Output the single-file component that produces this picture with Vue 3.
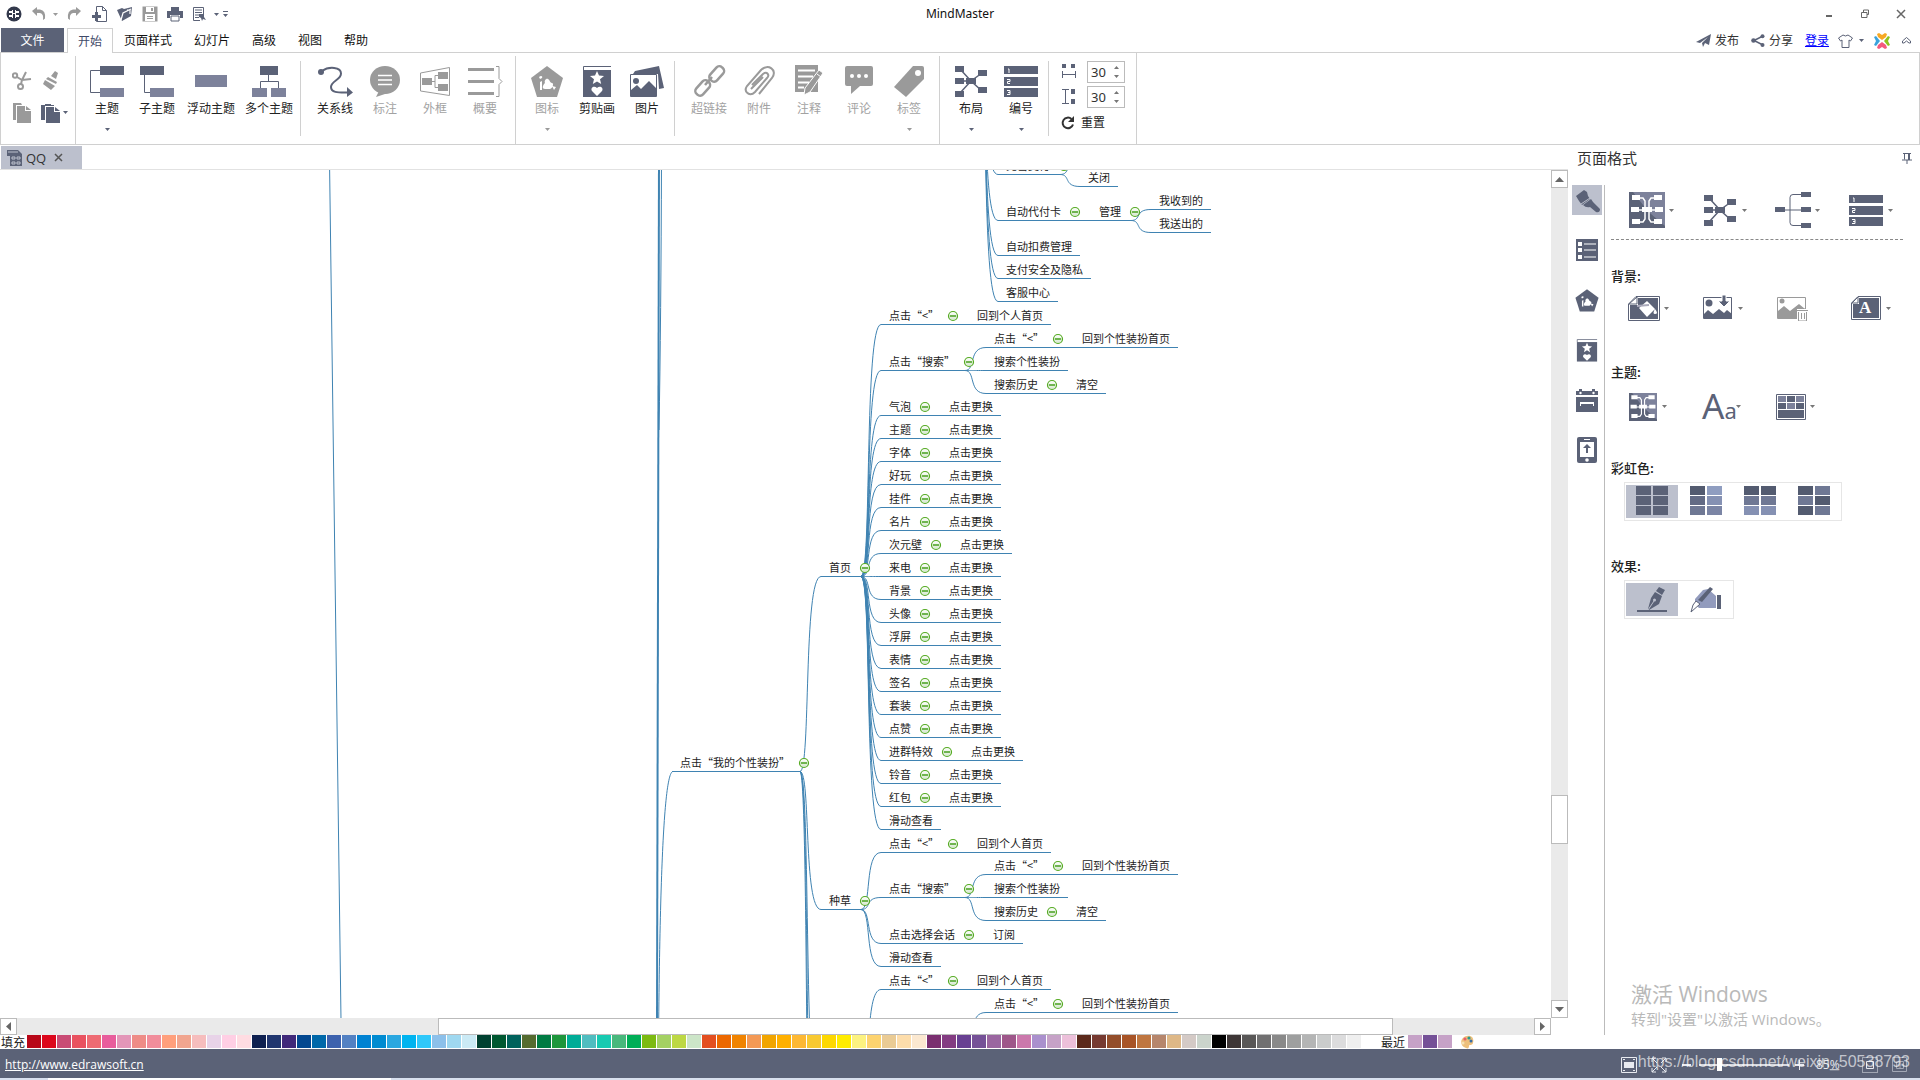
<script setup>
import { ref } from 'vue'

const tabs = ['页面样式', '幻灯片', '高级', '视图', '帮助']

const ribbon = [
  { items: [
    { label: '主题', icon: 'topic', caret: true },
    { label: '子主题', icon: 'subtopic' },
    { label: '浮动主题', icon: 'floating', wide: true },
    { label: '多个主题', icon: 'multiple', wide: true }
  ] },
  { end: true, items: [
    { label: '关系线', icon: 'relation' },
    { label: '标注', icon: 'callout', off: true },
    { label: '外框', icon: 'boundary', off: true },
    { label: '概要', icon: 'summary', off: true }
  ] },
  { items: [
    { label: '图标', icon: 'mark', off: true, caret: true },
    { label: '剪贴画', icon: 'clipart' },
    { label: '图片', icon: 'picture' }
  ] },
  { end: true, items: [
    { label: '超链接', icon: 'link', off: true },
    { label: '附件', icon: 'clip', off: true },
    { label: '注释', icon: 'note', off: true },
    { label: '评论', icon: 'comment', off: true },
    { label: '标签', icon: 'tag', off: true, caret: true }
  ] },
  { items: [
    { label: '布局', icon: 'layout', caret: true },
    { label: '编号', icon: 'number', caret: true }
  ] }
]

const hGap = ref(30)
const vGap = ref(30)
const zoom = ref(21)

const swatches = [
  '#b80718', '#dc071c', '#c94c75', '#e95260', '#ee6b73', '#e85d9c', '#e396b8', '#ee8c87', '#f18d9b', '#ff9f7c',
  '#f1a58f', '#f6bdbd', '#e8d3e8', '#ffcfe4', '#ffdce2', '#0e2050', '#21366f', '#40297a', '#034890', '#0068a9',
  '#3d62ae', '#5381c3', '#0082d2', '#008bd1', '#2aa7e0', '#00b4f0', '#2fc8fa', '#8cc0ea', '#9fd8f0', '#cbeaf5',
  '#004131', '#005831', '#00625c', '#556b2f', '#007b43', '#1e963c', '#00ac97', '#50bdc0', '#18cab1', '#48b87c',
  '#00ae57', '#7cba11', '#a4d163', '#bdd844', '#cce5c8', '#e34f20', '#ec6800', '#f08300', '#f39955', '#f1a500',
  '#ffb000', '#fdb833', '#f8c931', '#fdd800', '#ffec00', '#fcf280', '#fdd36f', '#eacb94', '#fdddab', '#fbe8d0',
  '#7a2f70', '#833c82', '#684092', '#755197', '#9a66a0', '#9e578a', '#cb78ac', '#aa90cd', '#c6a2c7', '#ecc0da',
  '#5b291b', '#763a31', '#934d2a', '#a85427', '#bf7640', '#b6866c', '#deb887', '#d4cac6', '#cbd4cc', '#000000',
  '#3e3636', '#595757', '#717071', '#898989', '#9e9f9f', '#b4b5b5', '#cacccc', '#dcdcdd', '#efefef'
]
const recent = ['#c6a2c7', '#755197', '#c6a2c7']

const sideTools = ['brush', 'list', 'mark', 'clipart', 'calendar', 'phone']
const layoutTools = ['theme', 'layout', 'tree', 'number']
const backTools = [
  { icon: 'fill', caret: true }, { icon: 'addpic', caret: true },
  { icon: 'delpic', off: true }, { icon: 'wordmark', caret: true }
]
const rainbow = [
  ['#5b6277', '#5b6277', '#5b6277', '#5b6277', '#5b6277', '#5b6277'],
  ['#535b70', '#8f9dc0', '#636b85', '#8591b3', '#6f7894', '#7b85a5'],
  ['#535b70', '#535b70', '#6f7894', '#6f7894', '#8591b3', '#8591b3'],
  ['#535b70', '#6f7894', '#6f7894', '#535b70', '#535b70', '#6f7894']
]

/* ---- mind map ---- */
const EM = 11
const widthOf = (s) => [...s].reduce((w, c) => w + (c === '<' ? 6 : EM), 0)

const labels = []
const toggles = []
const lines = []

const curve = (x1, y1, x2, y2) => {
  lines.push(`M${x1} ${y1}C${x1 + 11} ${y1} ${x1 + 3} ${y2} ${x2} ${y2}`)
}
const bar = (x1, x2, y) => lines.push(`M${x1} ${y}H${x2}`)

/* a chain of topics sharing one underline; returns the x of its right end */
function chain(x, y, texts, open = false) {
  let cx = x + 8
  texts.forEach((t, i) => {
    labels.push({ x: cx, y, t })
    const w = widthOf(t)
    const last = i === texts.length - 1
    if (!last || open) toggles.push({ x: cx + w + 14, y })
    cx += last ? w : w + 38
  })
  const end = cx + (open ? 10 : 8)
  bar(x, end, y)
  return end
}

function searchGroup(y) {
  const end = chain(881, y, ['点击“搜索”'], true)
  const kids = [['点击“<”', '回到个性装扮首页'], ['搜索个性装扮'], ['搜索历史', '清空']]
  kids.forEach((k, i) => {
    const ky = y + (i - 1) * 23
    curve(end, y, end + 21, ky)
    chain(end + 21, ky, k)
  })
}

/* wallet branch */
chain(998, 4, ['免密支付'], true)
curve(1060, 4, 1080, 16)
curve(1060, 4, 1080, -7)
chain(1080, 16, ['关闭'])
const cardEnd = chain(998, 50, ['自动代付卡', '管理'], true)
curve(cardEnd, 50, 1151, 39)
curve(cardEnd, 50, 1151, 62)
chain(1151, 39, ['我收到的'])
chain(1151, 62, ['我送出的'])
chain(998, 85, ['自动扣费管理'])
chain(998, 108, ['支付安全及隐私'])
chain(998, 131, ['客服中心'])
;[4, 50, 85, 108, 131].forEach((y) => curve(978, -130, 998, y))

/* home page branch */
const home = 406
chain(821, home, ['首页'], true)
const homeRows = ['气泡', '主题', '字体', '好玩', '挂件', '名片', '次元壁', '来电', '背景', '头像', '浮屏', '表情', '签名', '套装', '点赞', '进群特效', '铃音', '红包']
curve(861, home, 881, 154)
chain(881, 154, ['点击“<”', '回到个人首页'])
curve(861, home, 881, 200)
searchGroup(200)
homeRows.forEach((t, i) => {
  const y = 245 + i * 23
  curve(861, home, 881, y)
  chain(881, y, [t, '点击更换'])
})
curve(861, home, 881, 659)
chain(881, 659, ['滑动查看'])

/* wish list branch */
const wish = 739
chain(821, wish, ['种草'], true)
;[682, 727, 773, 796].forEach((y) => curve(861, wish, 881, y))
chain(881, 682, ['点击“<”', '回到个人首页'])
searchGroup(727)
chain(881, 773, ['点击选择会话', '订阅'])
chain(881, 796, ['滑动查看'])

/* next branch, continues below the viewport */
curve(861, 915, 881, 819)
chain(881, 819, ['点击“<”', '回到个人首页'])
curve(966, 865, 986, 842)
chain(986, 842, ['点击“<”', '回到个性装扮首页'])

/* parent topic */
chain(672, 601, ['点击“我的个性装扮”'], true)
curve(800, 601, 821, home)
;[wish, 960, 1140, 1400].forEach((y) => curve(800, 601, 821, y))
lines.push('M658 1010C658 760 662 601 673 601')
</script>

<template>
  <div class="app" lang="zh-CN">
    <svg class="defs" aria-hidden="true">
      <linearGradient id="knob" x1="0" y1="0" x2="0" y2="1"><stop offset="0" stop-color="#fff" /><stop offset="1" stop-color="#d3e6cb" /></linearGradient>
      <symbol id="topic" viewBox="0 0 36 32"><path d="M11 5.500H1.500V27.500H11" class="ln" /><path d="M11 1h24v9H11z" /><path d="M11 23h24v9H11z" fill="#7d829b" /></symbol>
      <symbol id="subtopic" viewBox="0 0 36 32"><path d="M5.500 10V27.500H11" class="ln" /><path d="M1 1h24v9H1z" /><path d="M11 23h24v9H11z" fill="#7d829b" /></symbol>
      <symbol id="floating" viewBox="0 0 36 32"><path d="M2 10h32v12H2z" fill="#7d829b" /></symbol>
      <symbol id="multiple" viewBox="0 0 36 32"><path d="M17.500 10v6M9.500 23v-6.500h18V23" class="ln" /><path d="M9 1h18v9H9z" /><path d="M1 23h15v9H1zM20 23h15v9H20z" fill="#7d829b" /></symbol>
      <symbol id="relation" viewBox="0 0 36 32"><path d="M5 6C12 1 24 2 24 8.500 24 15 14 16 14 22c0 6 8 5.500 16 5.500" class="ln" stroke-width="2" /><circle cx="4" cy="7" r="3" /><path d="M30 22l6 5.500-6 4.500z" /></symbol>
      <symbol id="callout" viewBox="0 0 36 32"><ellipse cx="18" cy="15" rx="15" ry="14" /><path d="M12 26l-3 6 12-4z" /><path d="M11 10.500h14M11 15h14M11 19.500h14" stroke="#fff" stroke-width="1.500" /></symbol>
      <symbol id="boundary" viewBox="0 0 36 32"><path d="M3.500 8L32.500 2.500v28L3.500 26zM15 16.500h3M22 10.500h-4v12h4" class="ln" /><path d="M5 13h10v7H5zM21 7h10v7H21zM21 19h10v7H21z" /></symbol>
      <symbol id="summary" viewBox="0 0 36 32"><path d="M1 3h26v3H1zM1 15h26v3H1zM1 27h26v3H1z" /><path d="M29 1.500h3v12l3 3-3 3V31.500h-3" class="ln" /></symbol>
      <symbol id="mark" viewBox="0 0 36 32"><path d="M18 1l16 12-6 19H8L2 13z" stroke-linejoin="round" /><path d="M16 18c-1-2 1-5 3-4s2 4 4 4 1 5-2 6h-5c-3 0-3-3 0-6zM11 17l2-1v9h-2zM10 12c2-2 4-1 3 1l-2 1zM23 21l4 1-2 3z" fill="#fff" /></symbol>
      <symbol id="clipart" viewBox="0 0 36 32"><path d="M4.500 5V1.500H32" class="ln" /><path d="M4 5h28v27H4z" /><path d="M18 6l2 4.500 5 .5-4 3.300 1.200 4.700L18 16.500 13.800 19l1.200-4.700L11 11l5-.5zM18 31l-5-5c-2-3 2-6 5-3 3-3 7 0 5 3z" fill="#fff" /></symbol>
      <symbol id="picture" viewBox="0 0 36 32"><path d="M6 6L30 1l5 22-5 1-1-15H4z" /><path d="M1.500 9.500h26v22h-26z" class="ln" /><circle cx="7" cy="16" r="3" /><path d="M2 31V25l6-5 4 4 8-8 7 7v8z" /></symbol>
      <symbol id="link" viewBox="0 0 36 32"><g class="ln" stroke-width="2.500"><rect x="17" y="5" width="17" height="9" rx="4" transform="rotate(-48 25 9)" /><rect x="3" y="19" width="17" height="9" rx="4" transform="rotate(-48 11 23)" /><path d="M14 20l7-8" /></g></symbol>
      <symbol id="clip" viewBox="0 0 36 32"><path d="M11 20L22 9c4-3 7 1 4 4L14 27c-5 5-12 0-8-6L20 5c7-7 17 0 11 8L18 29M10 24l12-12" class="ln" stroke-width="2" /></symbol>
      <symbol id="note" viewBox="0 0 36 32"><path d="M4 0h23v27H4z" /><path d="M7 5.500h17M7 11.500h15M7 17.500h11M7 22.500h6" stroke="#fff" stroke-width="2" /><path d="M28 5l4 3-13 19-6 3 1-7z" stroke="#fff" /><path d="M26 9l4 3" stroke="#fff" /></symbol>
      <symbol id="comment" viewBox="0 0 36 32"><path d="M6 1h24q2 0 2 2v16q0 2-2 2H19l-9 8v-8H6q-2 0-2-2V3q0-2 2-2z" /><g fill="#fff"><circle cx="11" cy="11" r="2" /><circle cx="18" cy="11" r="2" /><circle cx="25" cy="11" r="2" /></g></symbol>
      <symbol id="tag" viewBox="0 0 36 32"><path d="M22 1h9q2 0 2 2v11L15 32 3 22z" /><circle cx="27" cy="8" r="3" fill="#fff" /></symbol>
      <symbol id="layout" viewBox="0 0 36 32"><path d="M7 4l11 12M7 16h11M7 28l11-12M29 8L18 16l11 10" class="ln" stroke-width="1.500" /><path d="M2 1h9v6H2zM2 13h9v6H2zM2 26h9v6H2zM13 13h10v6H13zM25 5h9v6h-9zM25 22h9v6h-9z" /></symbol>
      <symbol id="number" viewBox="0 0 36 32"><path d="M1 1h34v8H1zM1 12h34v9H1zM1 23h34v9H1z" /><path d="M5 4h1v4M4 14.500h3v2H4.500v2H7M4 25.500h3v4H4M5 27.500h2" fill="none" stroke="#fff" /></symbol>
      <symbol id="theme" viewBox="0 0 36 36"><path d="M0 0h36v36H0z" /><path d="M4 0h32v34L22 22 18 18z" fill="#7d829b" /><path d="M10 6h4l2 3v18l-2 3h-4M26 6h-4l-2 3v18l2 3h4M8 18h20" fill="none" stroke="#fff" stroke-width="1.500" /><path d="M3 3h8v5H3zM25 3h8v5h-8zM2 15h8v5H2zM26 15h8v5h-8zM3 27h8v5H3zM25 27h8v5h-8zM13 15h10v5H13z" fill="#fff" /></symbol>
      <symbol id="tree" viewBox="0 0 36 36"><path d="M10 18h16M26 2.500h-8q-3 0-3 3v25q0 3 3 3h8" class="ln" /><path d="M0 15h10v5H0zM26 0h10v5H26zM26 15h10v5H26zM26 31h10v5H26z" /></symbol>
      <symbol id="brush" viewBox="0 0 30 30"><path d="M4 11l8-6 3 2 1 4 2 3-8 6-3-4z" /><path d="M11 20l8-6 2 3 7 7q0 4-4 3l-6-5q-4 1-7-2z" /><path d="M9 19l9-6" stroke="#bcc0cd" /></symbol>
      <symbol id="list" viewBox="0 0 30 30"><path d="M4 4h22v22H4z" /><path d="M6 7h4v4H6zM6 13h4v4H6zM6 20h4v4H6zM12 8.500h12v1H12zM12 14.500h12v1H12zM12 21.500h12v1H12z" fill="#fff" /></symbol>
      <symbol id="calendar" viewBox="0 0 30 30"><path d="M4 6h3V4h3v2h10V4h3v2h3v4H4zM4 12h22v15H4z" /><path d="M8 17h14v4h-1v-2H9v2H8z" fill="#fff" /><circle cx="8.500" cy="8" r="1.200" fill="#fff" /><circle cx="21.500" cy="8" r="1.200" fill="#fff" /></symbol>
      <symbol id="phone" viewBox="0 0 30 30"><rect x="5" y="2" width="20" height="26" rx="2" /><path d="M8 7h14v15H8zM12 4h6v1h-6z" fill="#fff" /><circle cx="15" cy="25" r="1.800" fill="#fff" /><path d="M15 9l4 4h-3v5h-2v-5h-3z" /></symbol>
      <symbol id="fill" viewBox="0 0 32 26"><path d="M.5 25.500V9L8 1.500h23.500v24z" class="ln" /><path d="M2 23V10h8V3h20v21H2z" /><path d="M1 9h8V2z" fill="#fff" stroke="#5b6277" /><path d="M11 13l8-7 8 8-8 8zM27 14q4 5 0 5-3 0 0-5z" fill="#fff" /><path d="M9 11l12-1" stroke="#aab" stroke-width="2" /></symbol>
      <symbol id="addpic" viewBox="0 0 32 26"><path d="M1.500 2.500h28v21h-28z" class="ln" /><circle cx="7" cy="8" r="3.500" /><path d="M2 23v-4l4-4 5 4 6-5 5 4 3-3 5 4v5z" /><path d="M20 0h4v6h4l-6 6-6-6h4z" stroke="#fff" /></symbol>
      <symbol id="delpic" viewBox="0 0 32 26"><path d="M1.500 2.500h28v21h-28z" class="ln" /><circle cx="6" cy="6" r="2.500" /><path d="M2 23v-7l6-5 6 5 9-7 6 5v9z" /><path d="M21 14h12v12H21z" fill="#fff" /><path d="M21 15.500h11M24.500 13.500h4M22.500 17v9h8v-9M25.500 18v6M28.500 18v6" class="ln" /></symbol>
      <symbol id="wordmark" viewBox="0 0 32 26"><path d="M1.500 24.500V8L8 1.500h22.500v23z" class="ln" /><path d="M3 22.500V9h6V3h20v20H3z" /><path d="M2 8h6V2z" fill="#fff" stroke="#5b6277" /></symbol>
      <symbol id="palette-grid" viewBox="0 0 30 26"><path d="M.5 .5h29v25H.5z" class="ln" /><path d="M2 2h8v6H2zM20 2h8v6h-8zM11 9h8v6h-8z" fill="#7d829b" /><path d="M11 2h8v6h-8zM2 9h8v6H2zM20 9h8v6h-8zM2 16h26v8H2z" /></symbol>
      <symbol id="caret" viewBox="0 0 5 3"><path d="M0 0h5L2.500 3z" /></symbol>
    </svg>

    <header class="titlebar">
      <div class="quick">
        <svg width="16" height="16" viewBox="0 0 16 16"><circle cx="8" cy="8" r="7.500" fill="#33394c" /><path d="M3 5h3v2H3zM3 9h3v2H3zM10 5h3v2h-3zM10 9h3v2h-3zM6 4h1v8H6zM9 4h1v8H9zM6 7h4v1H6z" fill="#fff" /></svg>
        <button class="tb undo off" aria-label="undo"><svg width="15" height="14" viewBox="0 0 15 14"><path d="M0 4l5-4v2.500h3q6 1 5 9l-2 1.500q1-6-3-7H5v3z" /></svg></button>
        <button class="tb small off" aria-label="undo list"><svg width="5" height="3"><use href="#caret" /></svg></button>
        <button class="tb redo off" aria-label="redo"><svg width="15" height="14" viewBox="0 0 15 14"><path d="M15 4l-5-4v2.500H7q-6 1-5 9L4 13Q3 7 7 6h3v3z" /></svg></button>
        <button class="tb" aria-label="new"><svg width="16" height="16" viewBox="0 0 16 16"><path d="M4.500 6V.5h6l4 4v11h-10V13M10.500 .5v4h4" class="ln" /><path d="M3 6h3v3h3v3H6v3H3v-3H0V9h3z" /></svg></button>
        <button class="tb" aria-label="open"><svg width="16" height="16" viewBox="0 0 16 16"><path d="M0 4l5-2 2 1 8-2-1 9-9 5z" /><path d="M4 14L6 7l8-4M10 4l3 0 0 4" stroke="#fff" fill="none" stroke-width="1.200" /></svg></button>
        <button class="tb off" aria-label="save"><svg width="16" height="16" viewBox="0 0 16 16"><path d="M.5 .5h15v15H.5z" /><path d="M4 1h8v5H4zM3 8h10v7H3z" fill="#fff" /><path d="M5 10h6v1H5zM5 12h6v1H5zM9 2h2v3H9z" /></svg></button>
        <button class="tb" aria-label="print"><svg width="16" height="16" viewBox="0 0 16 16"><path d="M4 1h8v4H4zM0 5h16v7h-3V9H3v3H0z" /><path d="M4 10h8v5H4z" class="ln" /></svg></button>
        <button class="tb" aria-label="export"><svg width="16" height="16" viewBox="0 0 16 16"><path d="M11.500 9V1.500h-10v13H8M3 4h7M3 6.500h7M3 9h5M3 11.500h4" class="ln" /><path d="M7 8h5v3l2 3-3-1-1 2-1-3-2-1z" /></svg></button>
        <button class="tb small" aria-label="export list"><svg width="5" height="3"><use href="#caret" /></svg></button>
        <button class="tb small" aria-label="customize"><svg width="5" height="6" viewBox="0 0 5 6"><path d="M0 0h5v1H0zM0 3h5L2.500 6z" /></svg></button>
      </div>
      <h1>MindMaster</h1>
      <div class="win">
        <button aria-label="minimize"><svg width="10" height="10" viewBox="0 0 10 10"><path d="M2 6h6v2H2z" /></svg></button>
        <button aria-label="restore"><svg width="10" height="10" viewBox="0 0 10 10"><path d="M3.500 3V1h5v4.500H7M1.500 3.500H7V8.500H1.500z" fill="none" stroke="currentColor" /></svg></button>
        <button aria-label="close"><svg width="10" height="10" viewBox="0 0 10 10"><path d="M1 1l8 8M9 1L1 9" fill="none" stroke="currentColor" stroke-width="1.500" /></svg></button>
      </div>
    </header>

    <nav class="menu">
      <button class="file">文件</button>
      <button class="current">开始</button>
      <button v-for="t in tabs" :key="t">{{ t }}</button>
      <div class="account">
        <button><svg width="15" height="14" viewBox="0 0 15 14"><path d="M0 8L15 0l-2 11-4-2-2 4-1-4 6-6-8 6z" /></svg>发布</button>
        <button><svg width="14" height="13" viewBox="0 0 14 13"><path d="M12 2L3 6.500 12 11" fill="none" stroke="currentColor" stroke-width="1.500" /><circle cx="11.500" cy="2.200" r="2" /><circle cx="2.500" cy="6.500" r="2.300" /><circle cx="11.500" cy="11" r="2" /></svg>分享</button>
        <a href="#login">登录</a>
        <button class="shirt" aria-label="skin"><svg width="15" height="14" viewBox="0 0 15 14"><path d="M5 1q2.500 2 5 0l4.500 3-2 3L11 6v7.500H4V6L2.500 7l-2-3z" class="ln" /></svg><svg width="5" height="3"><use href="#caret" /></svg></button>
        <svg class="logo" width="16" height="16" viewBox="0 0 16 16"><path d="M3 1l2-1 3 2 3-2 2 1-1 3-4 3-4-3z" fill="#f7a823" /><path d="M3 15l2 1 3-2 3 2 2-1-1-3-4-3-4 3z" fill="#f4587c" /><path d="M0 4l2-1 4 5-4 5-2-1 2-4z" fill="#3aa3dc" /><path d="M16 4l-2-1-4 5 4 5 2-1-2-4z" fill="#8fc31f" /></svg>
        <button aria-label="collapse"><svg width="9" height="8" viewBox="0 0 9 8"><path d="M.5 4l4-3.500 4 3.500v2H7L4.500 4 2 6H.5z" class="ln" /></svg></button>
      </div>
    </nav>

    <section class="ribbon">
      <div class="clipboard">
        <button class="off" aria-label="cut"><svg width="20" height="20" viewBox="0 0 20 20"><g fill="none" stroke="currentColor" stroke-width="2"><circle cx="3" cy="5.500" r="2.200" /><circle cx="8.500" cy="16.500" r="2.500" /><path d="M5 7l5 3 9-1M9 14l1-4 4-8" /></g></svg></button>
        <button class="off" aria-label="format painter"><svg width="20" height="20" viewBox="0 0 20 20"><path d="M14 1l3 2-2 6-5-3zM7 7l9 5-1 2-10-5zM4 10l10 6-4 4-8-6z" /></svg></button>
        <button class="off" aria-label="copy"><svg width="20" height="20" viewBox="0 0 20 20"><path d="M1 0h8l1 2H4v15H1z" /><path d="M5 3h8v5h6v12H5z" /><path d="M14 3l5 4h-5z" /></svg></button>
        <button class="paste" aria-label="paste"><svg width="20" height="20" viewBox="0 0 20 20"><path d="M0 2h4V1h6v1h3v1H4v14H0z" /><path d="M5 4h8v5h6v11H5z" /><path d="M14 4l5 4h-5z" /></svg><svg width="5" height="3"><use href="#caret" /></svg></button>
      </div>
      <div v-for="(g, i) in ribbon" :key="i" class="group" :class="{ end: g.end }">
        <button v-for="b in g.items" :key="b.label" class="big" :class="{ off: b.off, wide: b.wide }">
          <svg width="36" height="32"><use :href="'#' + b.icon" /></svg>
          <span>{{ b.label }}</span>
          <svg v-if="b.caret" width="5" height="3"><use href="#caret" /></svg>
        </button>
      </div>
      <div class="spacing">
        <label>
          <svg width="16" height="16" viewBox="0 0 16 16"><path d="M1 0h4v4H1zM10 0h4v4h-4z" /><path d="M1.500 7v7M14.500 7v7M1 10.500h13" class="ln" /></svg>
          <input v-model="hGap" type="text" aria-label="水平间距" />
          <svg class="spin" width="5" height="14" viewBox="0 0 5 14"><path d="M0 4h5L2.500 1zM0 10h5l-2.500 3z" /></svg>
        </label>
        <label>
          <svg width="16" height="16" viewBox="0 0 16 16"><path d="M1 .5h7M1 14.500h7M4.500 1v13" class="ln" /><path d="M10 0h4v5h-4zM10 10h4v5h-4z" /></svg>
          <input v-model="vGap" type="text" aria-label="垂直间距" />
          <svg class="spin" width="5" height="14" viewBox="0 0 5 14"><path d="M0 4h5L2.500 1zM0 10h5l-2.500 3z" /></svg>
        </label>
        <button><svg width="14" height="14" viewBox="0 0 14 14"><path d="M12 8.500A5.300 5.300 0 1 1 10.500 3" fill="none" stroke="#333" stroke-width="2" /><path d="M13 0v6H7z" fill="#333" /></svg>重置</button>
      </div>
    </section>

    <main>
      <div class="work">
        <div class="docs">
          <button class="doc">
            <svg width="16" height="16" viewBox="0 0 16 16"><path d="M0 0h11l4 4v12H3V6H0z" /><path d="M1 2h10M5 7h3v2H5zM10 7h3v2h-3zM5 12h3v2H5zM10 12h3v2h-3z" stroke="#bcc0cd" fill="none" /></svg>
            <span>QQ</span>
            <svg width="9" height="9" viewBox="0 0 9 9"><path d="M1 1l7 7M8 1L1 8" stroke="#555" stroke-width="1.500" /></svg>
          </button>
        </div>
        <div class="view">
          <div class="canvas">
            <svg class="map">
              <g class="wires">
                <path d="M329.500 -10L341 850" />
                <path d="M659 -10Q659 500 657 850" stroke-width="2" />
                <path d="M661.500 -10Q661 150 659 260" />
                <path v-for="(d, i) in lines" :key="i" :d="d" transform="translate(0 .5)" />
              </g>
              <g v-for="(t, i) in toggles" :key="'t' + i" class="toggle">
                <circle :cx="t.x" :cy="t.y - 8" r="4.500" />
                <path :d="`M${t.x - 3} ${t.y - 8}h6`" />
              </g>
              <text v-for="(l, i) in labels" :key="'l' + i" :x="l.x" :y="l.y - 4">{{ l.t }}</text>
            </svg>
          </div>
          <div class="bar vbar">
            <button aria-label="up"><svg width="9" height="5" viewBox="0 0 9 5"><path d="M4.500 0L9 5H0z" /></svg></button>
            <i class="v1"></i><i class="thumb v2"></i><i class="v3"></i>
            <button aria-label="down"><svg width="9" height="5" viewBox="0 0 9 5"><path d="M0 0h9L4.500 5z" /></svg></button>
          </div>
        </div>
        <div class="bar hbar">
          <button aria-label="left"><svg width="5" height="9" viewBox="0 0 5 9"><path d="M5 0v9L0 4.500z" /></svg></button>
          <i class="h1"></i><i class="thumb h2"></i><i class="h3"></i>
          <button aria-label="right"><svg width="5" height="9" viewBox="0 0 5 9"><path d="M0 0v9l5-4.500z" /></svg></button>
        </div>
      </div>

      <aside>
        <div class="paneltitle">
          <h2>页面格式</h2>
          <button aria-label="pin"><svg width="10" height="12" viewBox="0 0 10 12"><path d="M1 1.500h8M2.500 1.500v6M0 8h10M5 8v4" class="ln" /><path d="M6 1h2v7H6z" /></svg></button>
        </div>
        <div class="panel">
          <div class="rail">
            <button v-for="(s, i) in sideTools" :key="s" :class="{ on: i === 0, mini: s === 'mark' || s === 'clipart' }" :aria-label="s"><svg><use :href="'#' + s" /></svg></button>
          </div>
          <div class="props">
            <div class="tools top">
              <button v-for="t in layoutTools" :key="t" :aria-label="t"><svg width="36" height="36"><use :href="'#' + t" /></svg><svg width="5" height="3"><use href="#caret" /></svg></button>
            </div>
            <h3>背景:</h3>
            <div class="tools">
              <button v-for="t in backTools" :key="t.icon" :class="{ off: t.off }" :aria-label="t.icon">
                <svg width="32" height="26"><use :href="'#' + t.icon" /></svg><b v-if="t.icon === 'wordmark'">A</b><svg v-if="t.caret" width="5" height="3"><use href="#caret" /></svg>
              </button>
            </div>
            <h3>主题:</h3>
            <div class="tools">
              <button aria-label="theme"><svg width="30" height="28"><use href="#theme" /></svg><svg width="5" height="3"><use href="#caret" /></svg></button>
              <button class="font" aria-label="font"><span class="aa">A<small>a</small></span><svg width="5" height="3"><use href="#caret" /></svg></button>
              <button aria-label="colors"><svg width="30" height="26"><use href="#palette-grid" /></svg><svg width="5" height="3"><use href="#caret" /></svg></button>
            </div>
            <h3>彩虹色:</h3>
            <div class="choices">
              <button v-for="(r, i) in rainbow" :key="i" :class="{ on: i === 0 }" aria-label="rainbow">
                <span class="cells"><i v-for="(c, j) in r" :key="j" :style="{ background: c }"></i></span>
              </button>
            </div>
            <h3 class="fx">效果:</h3>
            <div class="choices">
              <button class="on" aria-label="pen"><svg width="30" height="26" viewBox="0 0 30 26"><path d="M0 23h30v2H0z" /><path d="M22 0l6 3-3 5-6-4z" /><path d="M18 5l7 4-3 8-10 6-1-1 3-11z" /><path d="M11 23l6-9" stroke="#bcc0cd" fill="none" /><circle cx="17.500" cy="13" r="1.500" fill="#bcc0cd" /></svg></button>
              <button aria-label="hand drawn"><svg width="32" height="26" viewBox="0 0 32 26"><path d="M5 12l8-9 5-1 8 7v12H9l-4-4z" fill="#929bbd" /><path d="M27 8h4v14h-4z" /><path d="M20 0l3 2L12 15l-4-2z" /><path d="M6 14l4 3-9 8 2-7z" fill="#fff" stroke="#5b6277" /></svg></button>
            </div>
            <div class="activate"><p>激活 Windows</p><p>转到"设置"以激活 Windows。</p></div>
          </div>
        </div>
      </aside>
    </main>

    <div class="colors">
      <span class="lab">填充</span>
      <button v-for="(c, i) in swatches" :key="i" :style="{ background: c }" :aria-label="c"></button>
      <span class="lab recent">最近</span>
      <button v-for="(c, i) in recent" :key="'r' + i" :style="{ background: c }" :aria-label="c"></button>
      <svg class="pal" width="14" height="14" viewBox="0 0 14 14"><path d="M7 1c6-1 7 4 6 7s-4 1-4 3-1 3-3 2C-1 11 0 2 7 1z" fill="#eec07c" /><circle cx="5" cy="4" r="1.600" fill="#e8606a" /><circle cx="9" cy="3" r="1.600" fill="#2a9a8c" /><circle cx="11" cy="6" r="1.500" fill="#3a6ea5" /><circle cx="3" cy="8" r="1.500" fill="#f7e2b5" /></svg>
    </div>

    <footer>
      <a href="http://www.edrawsoft.cn">http://www.edrawsoft.cn</a>
      <div class="status">
        <button aria-label="fit"><svg width="16" height="16" viewBox="0 0 16 16"><path d="M.5 .5h15v15H.5z" class="ln" /><path d="M3 5h10v6H3z" /><path d="M2 2h2v1H2zM12 2h2v1h-2zM2 13h2v1H2zM12 13h2v1h-2z" /></svg></button>
        <button class="full" aria-label="full screen"><svg width="16" height="16" viewBox="0 0 16 16"><path d="M1 5V1h4M11 1h4v4M15 11v4h-4M5 15H1v-4M1 1l5 5M15 1l-5 5M15 15l-5-5M1 15l5-5" class="ln" /></svg></button>
        <button aria-label="zoom out"><svg width="9" height="10" viewBox="0 0 9 10"><path d="M0 4h9v2H0z" /></svg></button>
        <input v-model="zoom" type="range" min="0" max="100" aria-label="zoom" />
        <button aria-label="zoom in"><svg width="9" height="10" viewBox="0 0 9 10"><path d="M0 4h9v2H0zM4 0h1v10H4z" /></svg></button>
        <span class="pct">85%</span>
        <button aria-label="page"><svg width="16" height="16" viewBox="0 0 16 16"><path d="M.5 .5h15v15H.5z" class="ln" stroke-dasharray="1 1" /><path d="M4.500 4.500h7v7h-7z" class="ln" /></svg></button>
        <button class="dim" aria-label="window"><svg width="16" height="16" viewBox="0 0 16 16"><path d="M.5 .5h14v14H.5zM4.500 4.500h7v7h-7zM8 5v6M5 8h6" class="ln" /></svg></button>
      </div>
      <span class="blog">https://blog.csdn.net/weixin_50538793</span>
    </footer>
    <div class="strip"><i></i></div>
  </div>
</template>

<style>
body { background: #fff; }
</style>

<style scoped>
.app {
  display: flex; flex-direction: column; height: 100vh; overflow: hidden; position: relative;
  font: 12px/18px "Open Sans", "Noto Sans CJK SC", sans-serif; color: #222; background: #fff;
}
.defs { position: absolute; width: 0; height: 0; }
button { border: 0; background: none; padding: 0; margin: 0; font: inherit; color: inherit; display: flex; align-items: center; }
svg { fill: currentColor; flex: none; display: block; }
.ln { fill: none; stroke: currentColor; }
h1, h2, h3, p { margin: 0; font-weight: 400; }
.off { color: #9a9a9a; }

.titlebar { display: grid; grid-template-columns: 1fr auto 1fr; height: 28px; align-items: center; }
.titlebar h1 { font: 12px/18px "Noto Sans", sans-serif; color: #111; }
.quick { display: flex; align-items: center; padding-left: 6px; gap: 9px; height: 24px; color: #5b6277; }
.quick .off { color: #9a9a9a; }
.quick .undo { margin-left: 1px; }
.quick .small { margin: 0 -2px 0 -3px; }
.quick .redo { margin-left: 1px; margin-right: 2px; }
.win { display: flex; justify-content: flex-end; gap: 26px; padding-right: 14px; height: 24px; color: #666; }

.menu { display: flex; height: 24px; color: #111; position: relative; margin-bottom: -1px; }
.menu > button { padding: 2px 11px 0; height: 24px; }
.menu .file { width: 63px; justify-content: center; margin: 0 3px 0 1px; background: #5b6277; color: #fff; padding: 2px 0 0; }
.menu .current { border: 1px solid #d0d0d0; border-bottom: 0; height: 25px; padding: 1px 10px 0; background: #fff; color: #3f4a68; position: relative; z-index: 1; }
.account { margin-left: auto; display: flex; align-items: center; padding: 1px 9px 0 0; gap: 12px; color: #222; }
.account button { gap: 4px; color: #333; }
.account button svg { color: #5b6277; }
.account a { color: #00f; }
.account .shirt { gap: 6px; margin-left: -3px; margin-right: -2px; }

.ribbon { display: flex; height: 91px; border: 1px solid #d0d0d0; margin-top: 1px; }
.clipboard { display: grid; grid-template-columns: 29px 34px; grid-template-rows: 33px 33px; align-content: start; padding: 7px 0 0 11px; margin: 3px 0 0; border-right: 1px solid #d0d0d0; color: #5b6277; }
.clipboard .off { color: #9a9a9a; }
.clipboard .paste { gap: 2px; }
.group { display: flex; padding: 0 2px 0 6px; border-right: 1px solid #d0d0d0; margin: 8px 0; }
.group.end { padding: 5px 5px 0 9px; margin: 3px 0 0; }
.big { width: 50px; flex-direction: column; padding-top: 4px; color: #5b6277; }
.big.wide { width: 58px; }
.big.off { color: #9a9a9a; }
.big span { color: #222; line-height: 18px; margin: 3px 0 10px; white-space: nowrap; }
.big.off span { color: #a2a2a2; }
.spacing { width: 88px; padding: 8px 0 0 12px; border-right: 1px solid #d0d0d0; color: #5b6277; display: flex; flex-direction: column; gap: 3px; box-sizing: border-box; }
.spacing label { display: flex; align-items: center; position: relative; height: 22px; }
.spacing input { width: 38px; height: 22px; box-sizing: border-box; border: 1px solid #bbb; padding: 0 0 0 3px; margin-left: 10px; font: 13px/18px "Noto Sans", sans-serif; color: #333; }
.spacing .spin { position: absolute; left: 53px; top: 4px; color: #777; }
.spacing button { gap: 6px; color: #222; height: 24px; }

main { flex: 1; min-height: 0; display: flex; }
.work { flex: 1; min-width: 0; display: flex; flex-direction: column; }
.docs { height: 24px; border-bottom: 1px solid #e2e2e2; display: flex; align-items: flex-end; }
.doc { background: #bcc0cd; height: 23px; width: 81px; margin-left: 1px; padding-left: 6px; gap: 3px; font-size: 13px; color: #333; box-sizing: border-box; }
.doc svg { color: #5b6277; }
.doc span { margin-right: 5px; }
.view { flex: 1; min-height: 0; display: flex; }
.canvas { flex: 1; min-width: 0; overflow: hidden; position: relative; }
.map { position: absolute; inset: 0; width: 100%; height: 100%; font: 11px "Noto Sans CJK SC", sans-serif; font-kerning: none; fill: #1c1c1c; }
.wires { fill: none; stroke: #3f83b2; stroke-width: 1; }
.toggle circle { fill: url(#knob); stroke: #55ab22; stroke-width: 1.2; }
.toggle path { stroke: #3c9a10; stroke-width: 1.4; }
.bar { display: flex; background: #eaeaea; color: #666; }
.bar button { flex: none; background: #fff; border: 1px solid #bbb; box-sizing: border-box; justify-content: center; }
.vbar { flex-direction: column; width: 17px; }
.vbar button { height: 18px; }
.thumb { background: #fff; border: 1px solid #bbb; box-sizing: border-box; }
.v1 { flex: 609 0 0; }
.v2 { flex: 47 0 0; }
.v3 { flex: 157 0 0; }
.hbar { height: 17px; margin-right: 17px; }
.hbar button { width: 17px; }
.h1 { flex: 422 0 0; }
.h2 { flex: 954 0 0; }
.h3 { flex: 141 0 0; }

aside { width: 352px; display: flex; flex-direction: column; color: #5b6277; }
.paneltitle { height: 40px; box-sizing: border-box; padding: 3px 8px 17px 9px; display: flex; align-items: center; justify-content: space-between; }
.paneltitle h2 { font-size: 15px; line-height: 20px; color: #333; }
.panel { flex: 1; display: flex; }
.rail { flex: none; width: 37px; box-sizing: border-box; border-right: 1px solid #bbb; display: flex; flex-direction: column; gap: 20px; padding-left: 4px; }
.rail button { width: 30px; height: 30px; justify-content: center; }
.rail button svg { width: 30px; height: 30px; }
.rail button.mini svg { width: 26px; height: 24px; }
.on { background: #bcc0cd; }
.props { flex: 1; min-width: 0; padding-left: 6px; display: flex; flex-direction: column; }
.tools { display: grid; grid-template-columns: 74px 74px 74px auto; height: 32px; padding-left: 17px; margin-bottom: 38px; }
.tools button { gap: 4px; position: relative; color: #5b6277; }
.tools button.off { color: #9a9a9a; }
.tools button svg + svg, .aa + svg, b + svg { color: #777; }
.tools.top { grid-template-columns: 73px 73px 73px auto; height: 36px; padding: 7px 0 11px 18px; border-bottom: 1px dashed #888; margin: 0 17px 26px 0; }
.tools b { position: absolute; left: 9px; font: bold 17px/20px "Liberation Serif", serif; color: #fff; }
.aa { font: 35px/30px "Noto Sans", sans-serif; color: #5b6277; width: 32px; display: flex; align-items: baseline; padding-top: 3px; }
.aa small { font-size: 22px; }
.tools .font { gap: 2px; }
h3 { font-size: 13px; line-height: 20px; margin-bottom: 6px; font-weight: 500; color: #222; font-family: "Noto Sans CJK SC", sans-serif; }
.choices { align-self: flex-start; margin-left: 13px; display: flex; gap: 2px; border: 1px solid #e6e6e6; height: 35px; padding: 1px; margin-top: -2px; }
.choices button { width: 52px; height: 33px; margin-top: 1px; justify-content: center; }
.cells { display: grid; grid-template-columns: 15px 15px; grid-auto-rows: 9px; gap: 1px 2px; margin-top: -3px; }
h3.fx { margin-top: 35px; }
.activate { margin-top: auto; padding: 0 0 5px 20px; color: #b9b9b9; }
.activate p { font-size: 21px; line-height: 28px; }
.activate p + p { font-size: 15px; line-height: 22px; }

.colors { height: 14px; display: flex; gap: 1px; align-items: flex-start; background: #fff; }
.colors button { width: 14px; height: 13px; }
.lab { width: 25px; padding-left: 1px; line-height: 15px; color: #222; }
.recent { margin-left: 18px; width: 26px; }
.pal { margin-left: 7px; }
footer { height: 29px; background: #5b6277; color: #fff; display: flex; align-items: center; justify-content: space-between; padding: 0 12px 0 5px; position: relative; }
footer a { color: #fff; line-height: 18px; margin-bottom: -3px; }
.status { display: flex; align-items: center; gap: 14px; margin-top: 2px; color: #e8eaf0; }
.status .full { margin-right: 1px; }
.status input { appearance: none; width: 90px; height: 2px; background: #d6d8de; margin: 0 -8px 0 -6px; }
.status input::-webkit-slider-thumb { appearance: none; width: 5px; height: 13px; background: #fff; }
.pct { width: 24px; margin: 0 8px 0 -2px; }
.status .dim { color: #a2a7b5; }
.blog { position: absolute; right: 10px; top: 3px; font: 16px/20px "Liberation Sans", sans-serif; color: rgba(255, 255, 255, .65); }
.strip { height: 2px; background: #d9e0ee; padding-left: 48px; }
.strip i { display: block; width: 343px; height: 2px; background: #fff; }
</style>
